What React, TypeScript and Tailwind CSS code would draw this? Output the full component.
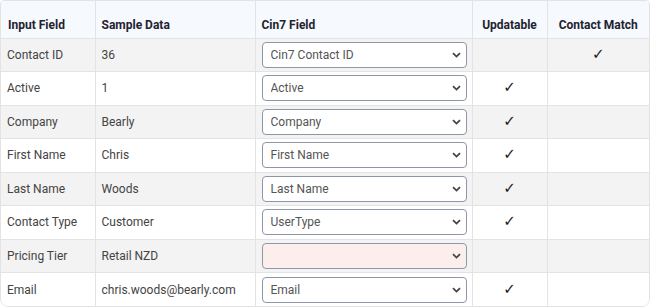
import React from 'react';

interface FieldRow {
    input: string;
    sample: string;
    cin7: string;
    updatable: boolean;
    match: boolean;
    missing?: boolean;
}

const rows: FieldRow[] = [
    { input: 'Contact ID', sample: '36', cin7: 'Cin7 Contact ID', updatable: false, match: true },
    { input: 'Active', sample: '1', cin7: 'Active', updatable: true, match: false },
    { input: 'Company', sample: 'Bearly', cin7: 'Company', updatable: true, match: false },
    { input: 'First Name', sample: 'Chris', cin7: 'First Name', updatable: true, match: false },
    { input: 'Last Name', sample: 'Woods', cin7: 'Last Name', updatable: true, match: false },
    { input: 'Contact Type', sample: 'Customer', cin7: 'UserType', updatable: true, match: false },
    { input: 'Pricing Tier', sample: 'Retail NZD', cin7: '', updatable: false, match: false, missing: true },
    { input: 'Email', sample: 'chris.woods@bearly.com', cin7: 'Email', updatable: true, match: false },
];

const options = ['', 'Cin7 Contact ID', 'Active', 'Company', 'First Name', 'Last Name', 'UserType', 'Email'];

// alan eşleme seçici
const FieldSelect: React.FC<{ value: string; missing?: boolean }> = ({ value, missing }) => (
    <div className="relative">
        <select
            defaultValue={value}
            className={`block w-full h-[26px] appearance-none rounded-[4px] border border-[#8d97a8] pl-[8px] pr-6 text-[12px] text-[#555] outline-none ${missing ? 'bg-[#fdeeee]' : 'bg-white'}`}
        >
            {options.map((o) => (
                <option key={o} value={o}>{o}</option>
            ))}
        </select>
        <svg
            className="pointer-events-none absolute right-[6px] top-1/2 -translate-y-1/2"
            width="9"
            height="6"
            viewBox="0 0 9 6"
        >
            <path d="M1 1.2 L4.5 4.6 L8 1.2" fill="none" stroke="#444" strokeWidth="1.8" />
        </svg>
    </div>
);

const Check = () => (
    <span className="font-['DejaVu_Sans',sans-serif] text-[15px] font-bold leading-none text-[#1a1a1a]">✓</span>
);

const App: React.FC = () => {
    return (
        <div className="w-[650px] h-[307px] bg-white font-['Roboto','Liberation_Sans',sans-serif]">
            <div className="w-[650px] overflow-hidden rounded-b-[8px] rounded-t-[4px] border border-[#e3e3e3]">
                <table className="w-full table-fixed border-collapse">
                    <colgroup>
                        <col className="w-[94px]" />
                        <col className="w-[160px]" />
                        <col className="w-[217px]" />
                        <col className="w-[75px]" />
                        <col />
                    </colgroup>
                    <thead>
                        <tr className="h-[37px] bg-[#f6f9fd] text-[12px] font-bold text-[#1f2330]">
                            <th className="px-[7px] pt-[12px] text-left align-middle">Input Field</th>
                            <th className="border-l border-[#e3e3e3] px-[6px] pt-[12px] text-left align-middle">Sample Data</th>
                            <th className="border-l border-[#e3e3e3] px-[6px] pt-[12px] text-left align-middle">Cin7 Field</th>
                            <th className="border-l border-[#e3e3e3] px-[4px] pt-[12px] text-center align-middle">Updatable</th>
                            <th className="border-l border-[#e3e3e3] px-[2px] pt-[12px] text-center align-middle">Contact Match</th>
                        </tr>
                    </thead>
                    <tbody>
                        {rows.map((row, i) => (
                            <tr
                                key={row.input}
                                className={`h-[33.5px] border-t border-[#e3e3e3] text-[12px] text-[#444] ${i % 2 === 0 ? 'bg-[#f3f3f3]' : 'bg-white'}`}
                            >
                                <td className="px-[6px] align-middle whitespace-nowrap">{row.input}</td>
                                <td className="border-l border-[#e3e3e3] px-[6px] align-middle whitespace-nowrap">{row.sample}</td>
                                <td className="border-l border-[#e3e3e3] pl-[6px] pr-[5px] py-[3px] align-middle">
                                    <FieldSelect value={row.cin7} missing={row.missing} />
                                </td>
                                <td className="border-l border-[#e3e3e3] text-center align-middle">
                                    {row.updatable && <Check />}
                                </td>
                                <td className="border-l border-[#e3e3e3] text-center align-middle">
                                    {row.match && <Check />}
                                </td>
                            </tr>
                        ))}
                    </tbody>
                </table>
            </div>
        </div>
    );
};

export default App;
